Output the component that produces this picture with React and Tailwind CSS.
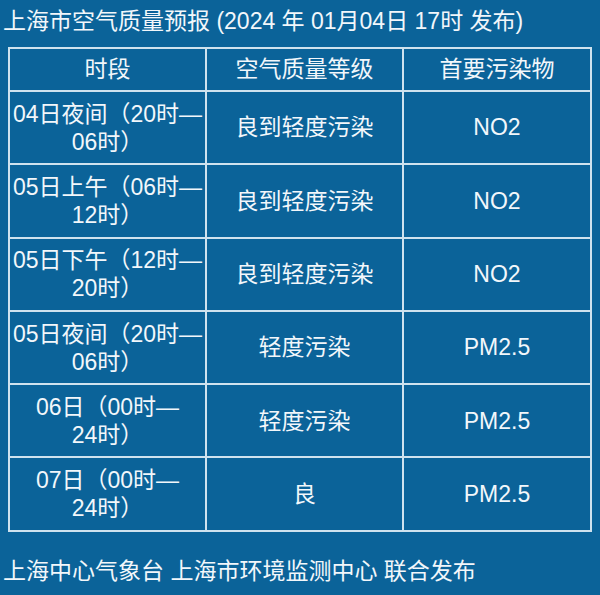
import React from "react";

const rows = [
  ["04日夜间（20时—", "06时）", "良到轻度污染", "NO2"],
  ["05日上午（06时—", "12时）", "良到轻度污染", "NO2"],
  ["05日下午（12时—", "20时）", "良到轻度污染", "NO2"],
  ["05日夜间（20时—", "06时）", "轻度污染", "PM2.5"],
  ["06日（00时—", "24时）", "轻度污染", "PM2.5"],
  ["07日（00时—", "24时）", "良", "PM2.5"],
];

const App = () => {
  return (
    <div
      className="w-[600px] h-[595px] bg-[#0b6399] text-[#f2f7fb] overflow-hidden"
      style={{ fontFamily: '"Liberation Sans", "Noto Sans CJK SC", sans-serif' }}
    >
      <div className="h-[46px] pl-[3px] pt-[6px] text-[23px] leading-[30px] whitespace-nowrap">
        上海市空气质量预报 (2024 年 01月04日 17时 发布)
      </div>
      <table className="ml-[8px] mt-[1px] w-[584px] border-collapse table-fixed">
        <thead>
          <tr className="h-[43px]">
            <th className="w-[197px] border-2 border-[#cfe2ee] font-normal text-[23px]">时段</th>
            <th className="w-[197px] border-2 border-[#cfe2ee] font-normal text-[23px]">空气质量等级</th>
            <th className="border-2 border-[#cfe2ee] font-normal text-[23px]">首要污染物</th>
          </tr>
        </thead>
        <tbody>
          {rows.map((r, i) => (
            <tr key={i} className="h-[73.3px]">
              <td className="border-2 border-[#cfe2ee] text-center text-[23px] leading-[28px] whitespace-nowrap">
                {r[0]}
                <br />
                {r[1]}
              </td>
              <td className="border-2 border-[#cfe2ee] text-center text-[23px]">{r[2]}</td>
              <td className="border-2 border-[#cfe2ee] text-center text-[23px]">{r[3]}</td>
            </tr>
          ))}
        </tbody>
      </table>
      <div className="pt-[24px] pl-[3px] text-[23px] leading-[30px] whitespace-nowrap">
        上海中心气象台 上海市环境监测中心 联合发布
      </div>
    </div>
  );
};

export default App;
